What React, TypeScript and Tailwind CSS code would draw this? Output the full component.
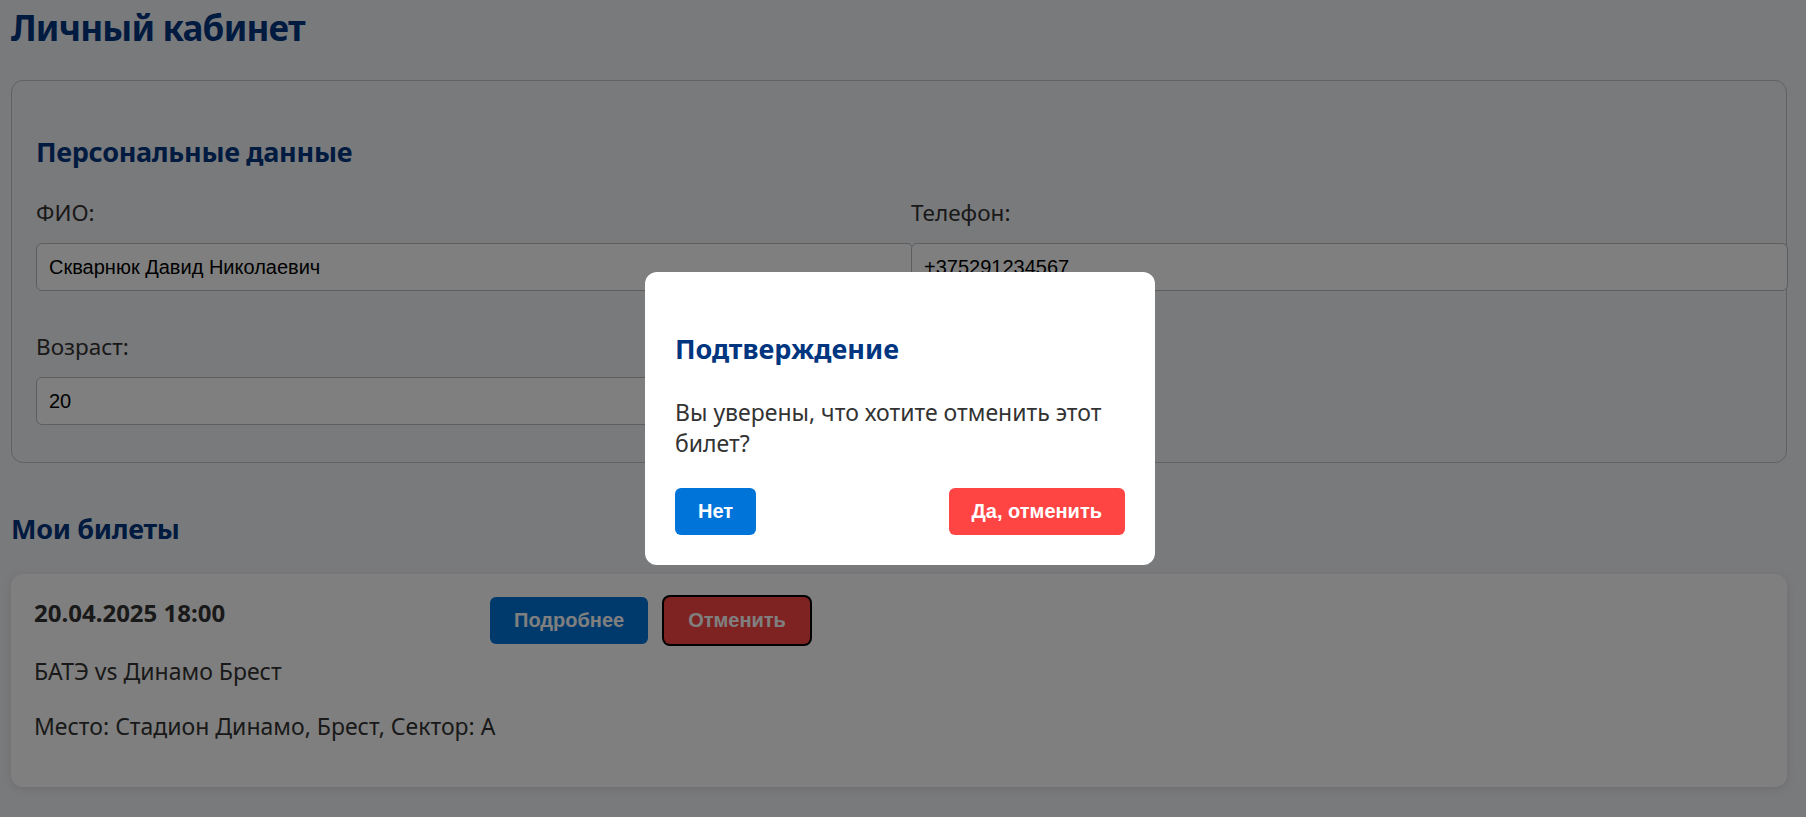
const sans = "font-['Noto_Sans',sans-serif]"
const arial = "font-['Liberation_Sans',Arial,sans-serif]"

function Field({ label, value }: { label: string; value: string }) {
  return (
    <div>
      <label className="mb-[15px] block text-[22.5px] leading-[30.6px] text-[#333]">{label}</label>
      <input
        readOnly
        value={value}
        className={`${arial} box-content block h-[23px] w-full rounded-[6px] border border-[#bcbcbc] bg-white px-3 py-[11.5px] text-[20px] leading-[23px] text-black outline-none`}
      />
    </div>
  )
}

export default function App() {
  return (
    <div className={`${sans} relative min-h-screen bg-[#f3f4f9] pt-[5px] pr-[19px] pb-[30px] pl-[11px] text-[#333]`}>
      <h1 className="mb-[29px] text-[35px] leading-[46px] font-bold tracking-[-0.8px] text-[#003580]">Личный кабинет</h1>

      <section className="rounded-[12px] border border-[#c0c2c6] px-[24px] pt-[52.5px] pb-[36.5px]">
        <h2 className="text-[27px] leading-[36px] font-bold tracking-[-0.3px] text-[#003580]">Персональные данные</h2>
        <div className="mt-[28px] grid grid-cols-2 gap-x-[24px] gap-y-[40.7px]">
          <Field label="ФИО:" value="Скварнюк Давид Николаевич" />
          <Field label="Телефон:" value="+375291234567" />
          <Field label="Возраст:" value="20" />
        </div>
      </section>

      <h2 className="mt-[48px] mb-[27.5px] text-[27px] leading-[36px] font-bold tracking-[-0.3px] text-[#003580]">Мои билеты</h2>

      <div className="flex items-start rounded-[12px] bg-white px-[23px] pt-[23px] pb-[45.6px] shadow-[0_2px_10px_rgba(0,0,0,0.1)]">
        <div className="w-[456px] shrink-0">
          <h3 className="text-[24px] leading-[32px] font-bold text-[#333]">20.04.2025 18:00</h3>
          <p className="mt-[26.5px] text-[23px] leading-[30.6px] whitespace-nowrap">БАТЭ vs Динамо Брест</p>
          <p className="mt-[24.4px] text-[23px] leading-[30.6px] whitespace-nowrap">Место: Стадион Динамо, Брест, Сектор: A</p>
        </div>
        <div className="flex">
          <button className={`${arial} rounded-[6px] bg-[#0074d9] px-[24px] py-[12px] text-[20px] leading-[23px] font-bold text-white`}>
            Подробнее
          </button>
          <button className={`${arial} ml-[16px] rounded-[6px] bg-[#ff4444] px-[24px] py-[12px] text-[20px] leading-[23px] font-bold text-white ring-2 ring-black`}>
            Отменить
          </button>
        </div>
      </div>

      <div className="fixed inset-0 flex items-start justify-center bg-black/50 pt-[272px] pr-[6px]">
        <div className="w-[510px] rounded-[12px] bg-white px-[30px] pt-[60px] pb-[30px]">
          <h3 className="text-[27px] leading-[34px] font-bold text-[#003580]">Подтверждение</h3>
          <p className="mt-[31px] text-[23px] leading-[30.6px] text-[#333]">Вы уверены, что хотите отменить этот билет?</p>
          <div className="mt-[30px] flex justify-between">
            <button className={`${arial} rounded-[6px] bg-[#0074d9] px-[23px] py-[12px] text-[20px] leading-[23px] font-bold text-white`}>
              Нет
            </button>
            <button className={`${arial} rounded-[6px] bg-[#ff4444] px-[23px] py-[12px] text-[20px] leading-[23px] font-bold text-white`}>
              Да, отменить
            </button>
          </div>
        </div>
      </div>
    </div>
  )
}
